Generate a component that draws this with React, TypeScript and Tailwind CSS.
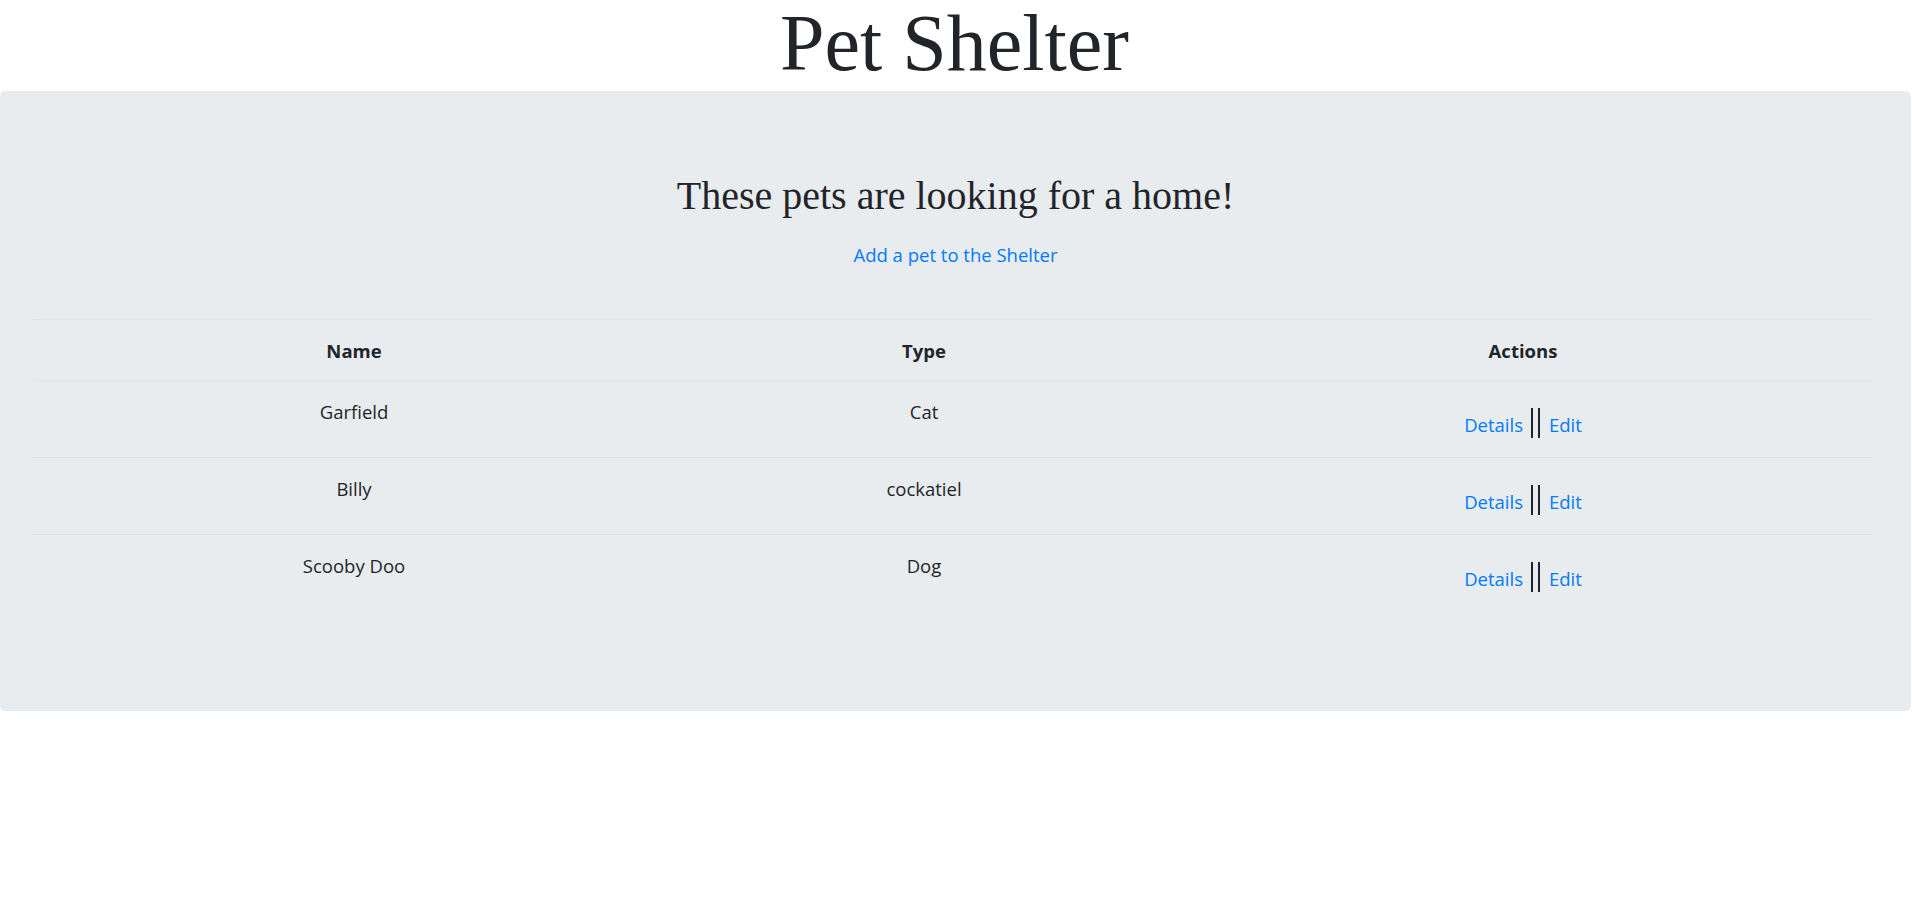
const pets = [
  { name: "Garfield", type: "Cat" },
  { name: "Billy", type: "cockatiel" },
  { name: "Scooby Doo", type: "Dog" },
];

const serif = "font-['Liberation_Serif','Times_New_Roman',serif]";

export default function App() {
  return (
    <div className="min-h-[924px] bg-white text-[#212529] font-['Open_Sans',sans-serif] text-[18.5px]">
      {/* Page title */}
      <header className="h-[91px] text-center">
        <h1 className={`${serif} text-[80px] leading-[86px] font-normal -ml-[3px]`}>Pet Shelter</h1>
      </header>

      {/* Jumbotron */}
      <main className="h-[620px] mr-px rounded-[5px] bg-[#e9ecef] pt-[81px]">
        <div className="flex flex-col items-center">
          <h2 className={`${serif} text-[40px] leading-[48px] font-normal`}>These pets are looking for a home!</h2>
          <a href="#" className="mt-[23px] block leading-6 text-[#007bff]">
            Add a pet to the Shelter
          </a>
        </div>

        <div className="mx-[33px] mt-[52px] w-[1840px]">
          <div className="grid grid-cols-[642px_498px_700px] h-[61px] border-t border-[#dee2e6] font-bold text-center leading-6">
            <div className="pt-[19px]">Name</div>
            <div className="pt-[19px]">Type</div>
            <div className="pt-[19px]">Actions</div>
          </div>
          {pets.map((p) => (
            <div key={p.name} className="grid grid-cols-[642px_498px_700px] h-[77px] border-t border-[#dee2e6] text-center leading-6">
              <div className="pt-[19px]">{p.name}</div>
              <div className="pt-[19px]">{p.type}</div>
              <div className="mt-[27px] h-[30px] flex justify-center items-center">
                <a href="#" className="mt-[4px] text-[#007bff]">Details</a>
                <span className="ml-[8px] mr-[9px] inline-block h-[30px] w-[9px] border-x-2 border-[#212529]" />
                <a href="#" className="mt-[4px] text-[#007bff]">Edit</a>
              </div>
            </div>
          ))}
        </div>
      </main>
    </div>
  );
}
